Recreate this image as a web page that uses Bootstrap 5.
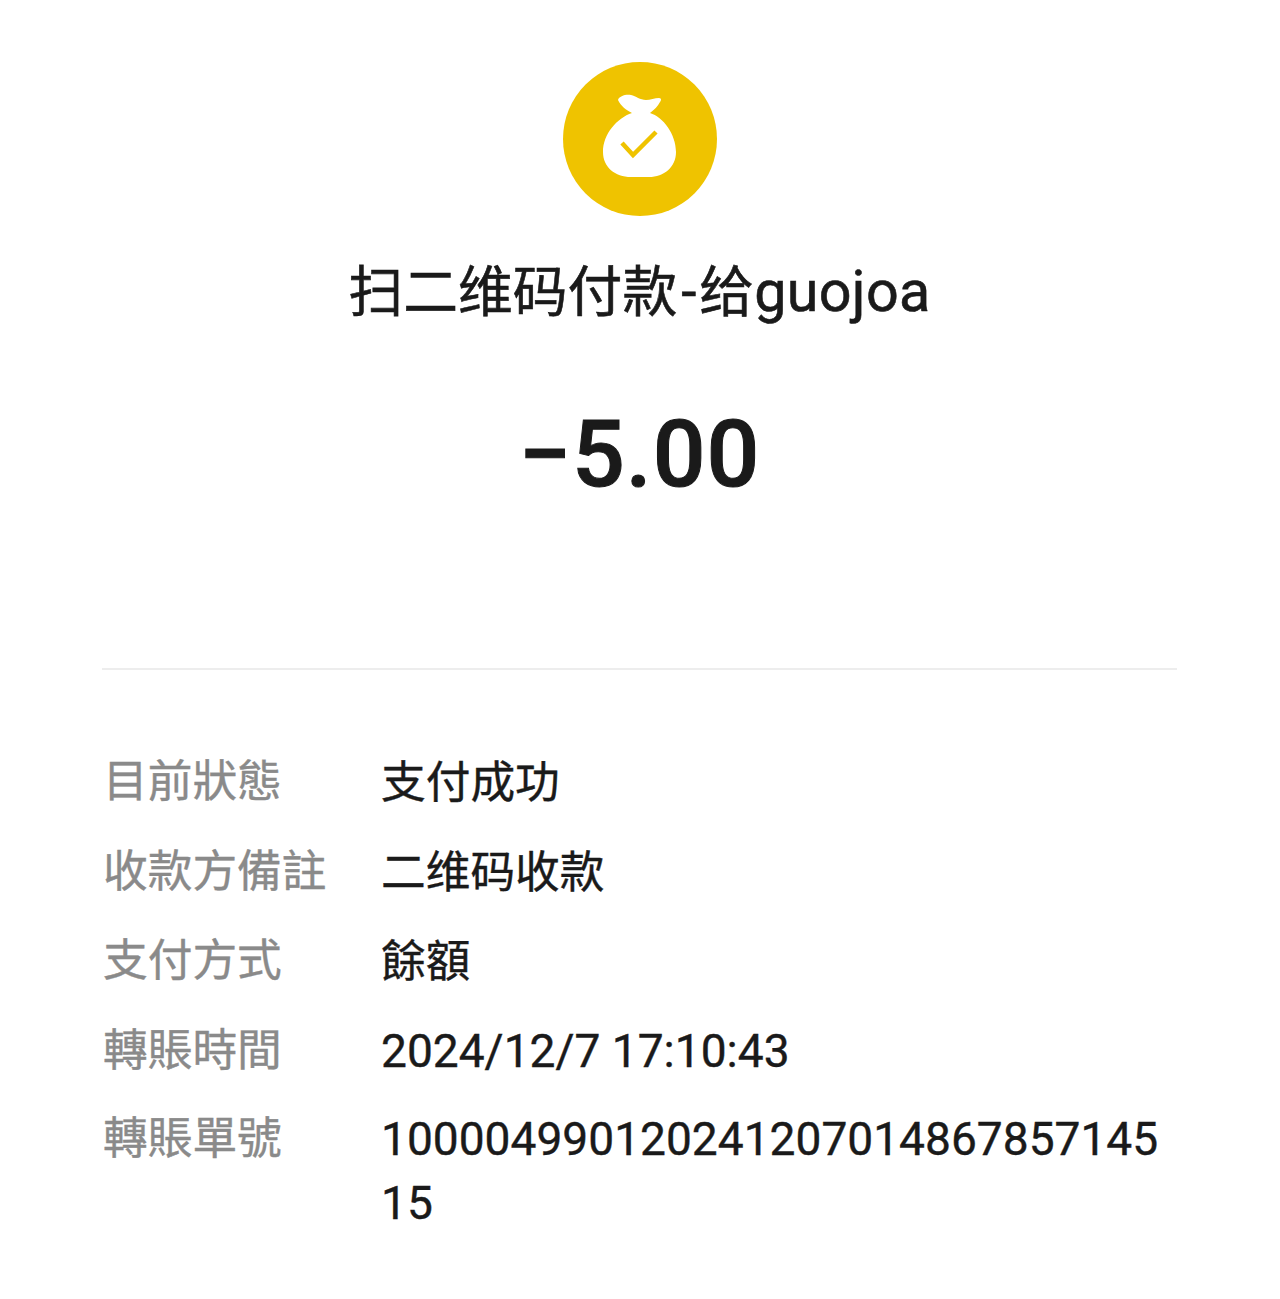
<!DOCTYPE html>
<html lang="zh-Hant">
<head>
  <meta charset="UTF-8">
  <title>支付成功</title>
  <link href="https://cdn.jsdelivr.net/npm/bootstrap@5.3.0/dist/css/bootstrap.min.css" rel="stylesheet">
  <style>
    body { background: #fff; color: #1a1a1a; font-family: Roboto, "Noto Sans CJK TC", sans-serif; }
    .pay-page { padding: 62px 103px 0 102px; height: 1299px; overflow: hidden; }
    .pay-icon { width: 154px; height: 154px; background: #efc300; }
    .pay-title { font-family: Roboto, "Noto Sans CJK SC", sans-serif; font-size: 54.8px; line-height: 64px; margin-top: 44px; -webkit-text-stroke: .6px #1a1a1a; }
    .pay-dash { padding: 0 3px 0 4px; }
    .pay-name { font-size: 57.5px; letter-spacing: .3px; }
    .pay-amount { font-family: "Roboto", sans-serif; font-size: 93px; font-weight: 500; line-height: 110px; margin-top: 76px; letter-spacing: 1px; -webkit-text-stroke: 1px #1a1a1a; }
    .pay-line { border-top: 2px solid #ededed; margin-top: 158px; margin-bottom: 80px; opacity: 1; }
    .info-row { margin-bottom: 24.6px; font-size: 44.7px; line-height: 64px; -webkit-text-stroke: .4px; }
    .info-label { width: 279px; flex: none; color: #8a8a8a; padding-left: 1px; }
    .info-value { word-break: break-all; font-size: 46.1px; min-width: 0; flex: 1; }
    .info-value .cjk { font-size: 44.7px; }
  </style>
</head>
<body>
  <div class="pay-page">
    <div class="d-flex flex-column align-items-center">
      <div class="pay-icon rounded-circle d-flex align-items-center justify-content-center">
        <svg width="154" height="154" viewBox="0 0 154 154">
          <path d="M55 38C56 34 63 32 68 33C73 34 77 38 83 38C87 38 92 36 96 36C99 36 98 39 97 40C95 44 91 48 87 51C100 55 113 72 113 90C113 105 101 115 86 115L68 115C52 115 40 105 40 90C40 72 54 56 69 51C63 48 58 44 55 38Z" fill="#fff"/>
          <path d="M59 81l11 12 23-23" fill="none" stroke="#efc300" stroke-width="4.5"/>
        </svg>
      </div>
      <div class="pay-title">扫二维码付款<span class="pay-dash">-</span>给<span class="pay-name">guojoa</span></div>
      <div class="pay-amount">−5.00</div>
    </div>
    <hr class="pay-line">
    <div class="d-flex info-row"><div class="info-label">目前狀態</div><div class="info-value"><span class="cjk">支付成功</span></div></div>
    <div class="d-flex info-row"><div class="info-label">收款方備註</div><div class="info-value"><span class="cjk">二维码收款</span></div></div>
    <div class="d-flex info-row"><div class="info-label">支付方式</div><div class="info-value"><span class="cjk">餘額</span></div></div>
    <div class="d-flex info-row"><div class="info-label">轉賬時間</div><div class="info-value">2024/12/7 17:10:43</div></div>
    <div class="d-flex info-row"><div class="info-label">轉賬單號</div><div class="info-value">10000499012024120701486785714515</div></div>
  </div>
  <script src="https://cdn.jsdelivr.net/npm/bootstrap@5.3.0/dist/js/bootstrap.bundle.min.js"></script>
</body>
</html>
